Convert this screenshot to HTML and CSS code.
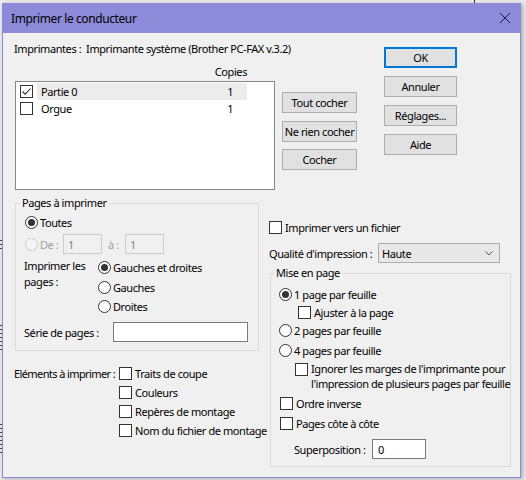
FILE: index.html
```html
<!DOCTYPE html>
<html lang="fr">
<head>
<meta charset="utf-8">
<title>Imprimer le conducteur</title>
<link rel="stylesheet" href="styles.css">
</head>
<body>
<div class="top-mark"></div>
<div class="ticks t1"></div>
<div class="ticks t2"></div>
<div class="ticks t3"></div>
<div class="window">
  <div class="titlebar">
    <span class="title">Imprimer le conducteur</span>
    <svg class="close" width="12" height="12" viewBox="0 0 12 12"><path d="M1 1 L11 11 M11 1 L1 11" stroke="#1c1c40" stroke-width="1" fill="none"/></svg>
  </div>
  <div class="client">
    <div class="top">
      <div class="top-left">
        <div class="printer">Imprimantes :&nbsp; Imprimante système (Brother PC-FAX v.3.2)</div>
        <div class="copies-head">Copies</div>
        <div class="list-row">
          <div class="listbox">
            <div class="item selected">
              <span class="cb checked"><svg width="11" height="11" viewBox="0 0 11 11"><path d="M1.5 5.5 L4.2 8.2 L9.5 2.5" stroke="#333" stroke-width="1.1" fill="none"/></svg></span>
              <span class="cell"><span>Partie 0</span><span>1</span></span>
            </div>
            <div class="item">
              <span class="cb"></span>
              <span class="cell"><span>Orgue</span><span>1</span></span>
            </div>
          </div>
          <div class="mid-buttons">
            <div class="btn b1">Tout cocher</div>
            <div class="btn b2">Ne rien cocher</div>
            <div class="btn b3">Cocher</div>
          </div>
        </div>
      </div>
      <div class="right-buttons">
        <div class="btn rbtn default">OK</div>
        <div class="btn rbtn">Annuler</div>
        <div class="btn rbtn">Réglages...</div>
        <div class="btn rbtn">Aide</div>
      </div>
    </div>
    <div class="bottom">
      <div class="bottom-left">
        <fieldset class="group pages">
          <legend>Pages à imprimer</legend>
          <div class="row r-toutes"><span class="radio on"></span><span>Toutes</span></div>
          <div class="row r-de">
            <span class="radio disabled"></span><span class="lbl-de dis">De :</span>
            <span class="input dis-input w39">1</span>
            <span class="lbl-a dis">à :</span>
            <span class="input dis-input w39">1</span>
          </div>
          <div class="sides">
            <div class="sides-label">Imprimer les<br>pages :</div>
            <div class="sides-opts">
              <div class="opt"><span class="radio on"></span><span>Gauches et droites</span></div>
              <div class="opt"><span class="radio"></span><span>Gauches</span></div>
              <div class="opt"><span class="radio"></span><span>Droites</span></div>
            </div>
          </div>
          <div class="row r-serie"><span class="lbl-serie">Série de pages :</span><span class="input w135"></span></div>
        </fieldset>
        <div class="elements">
          <div class="el-label">Eléments à imprimer :</div>
          <div class="el-opts">
            <div class="el"><span class="cb"></span><span>Traits de coupe</span></div>
            <div class="el"><span class="cb"></span><span>Couleurs</span></div>
            <div class="el"><span class="cb"></span><span>Repères de montage</span></div>
            <div class="el"><span class="cb"></span><span>Nom du fichier de montage</span></div>
          </div>
        </div>
      </div>
      <div class="bottom-right">
        <div class="row r-file"><span class="cb"></span><span>Imprimer vers un fichier</span></div>
        <div class="row r-quality">
          <span class="lbl-quality">Qualité d'impression :</span>
          <span class="select"><span>Haute</span><svg width="8" height="5" viewBox="0 0 8 5"><path d="M0.5 0.5 L4 4 L7.5 0.5" stroke="#555" stroke-width="1" fill="none"/></svg></span>
        </div>
        <fieldset class="group layout">
          <legend>Mise en page</legend>
          <div class="row m1"><span class="radio on"></span><span>1 page par feuille</span></div>
          <div class="row m2"><span class="cb"></span><span>Ajuster à la page</span></div>
          <div class="row m3"><span class="radio"></span><span>2 pages par feuille</span></div>
          <div class="row m4"><span class="radio"></span><span>4 pages par feuille</span></div>
          <div class="row m5"><span class="cb"></span><span class="two">Ignorer les marges de l'imprimante pour<br>l'impression de plusieurs pages par feuille</span></div>
          <div class="row m6"><span class="cb"></span><span>Ordre inverse</span></div>
          <div class="row m7"><span class="cb"></span><span>Pages côte à côte</span></div>
          <div class="row m8"><span class="lbl-super">Superposition :</span><span class="input w54">0</span></div>
        </fieldset>
      </div>
    </div>
  </div>
</div>
</body>
</html>
```
FILE: styles.css
```css
* { box-sizing: border-box; }
html, body { margin: 0; padding: 0; }
body {
  width: 526px;
  height: 480px;
  overflow: hidden;
  background: #e9e9ec;
  font-family: "Noto Sans", "Open Sans", sans-serif;
  font-size: 11px;
  letter-spacing: -0.42px;
  color: #000;
  position: relative;
}
.top-mark {
  position: absolute;
  left: 474px;
  top: 0;
  width: 1px;
  height: 3px;
  background: #333;
}
.ticks {
  position: absolute;
  left: 0;
  width: 2px;
  background: repeating-linear-gradient(to bottom, #444 0, #444 1px, transparent 1px, transparent 4px);
}
.t1 { top: 240px; height: 12px; }
.t2 { top: 325px; height: 26px; }
.t3 { top: 424px; height: 29px; }
.window {
  margin: 3px 0 0 2px;
  width: 519px;
  height: 475px;
  border: 1px solid #8d8ad9;
  border-top: 0;
  background: #f0f0f0;
  box-shadow: 2px 1px 4px rgba(0,0,0,0.25);
  display: flex;
  flex-direction: column;
}
.titlebar {
  height: 30px;
  flex: none;
  margin: 0 -1px;
  background: #8d8ad9;
  display: flex;
  align-items: center;
  justify-content: space-between;
  padding: 0 10px 0 9px;
  font-size: 12px;
  letter-spacing: -0.4px;
}
.close { display: block; }
.client {
  flex: 1;
  padding-left: 11px;
}
.top { display: flex; }
.top-left { width: 370px; padding-top: 8px; }
.printer { height: 16px; line-height: 16px; white-space: nowrap; }
.copies-head { margin-top: 7px; height: 16px; line-height: 16px; width: 233px; text-align: right; }
.list-row { display: flex; margin-top: 1px; }
.listbox {
  margin-left: 1px;
  width: 260px;
  height: 109px;
  border: 1px solid #828790;
  background: #fff;
  padding-top: 1px;
}
.item { height: 17px; display: flex; align-items: center; padding-left: 4px; }
.cell {
  margin-left: 4px;
  width: 210px;
  height: 17px;
  display: flex;
  align-items: center;
  justify-content: space-between;
  padding: 0 14px 0 4px;
}
.selected .cell { background: #ececec; }
.mid-buttons { margin-left: 7px; padding-top: 11px; display: flex; flex-direction: column; }
.btn {
  height: 21px;
  background: #e1e1e1;
  border: 1px solid #adadad;
  display: flex;
  align-items: center;
  justify-content: center;
  white-space: nowrap;
}
.mid-buttons .btn { width: 75px; }
.b2 { margin-top: 8px; }
.b3 { margin-top: 7px; }
.right-buttons { margin-top: 14px; display: flex; flex-direction: column; gap: 8px; }
.rbtn { width: 73px; }
.default { border-color: #0078d7; box-shadow: inset 0 0 0 1px #0078d7; }

.cb {
  width: 13px;
  height: 13px;
  border: 1px solid #333;
  background: #fff;
  flex: none;
  display: flex;
  align-items: center;
  justify-content: center;
}
.cb svg { display: block; }
.radio {
  width: 13px;
  height: 13px;
  border: 1px solid #333;
  border-radius: 50%;
  background: #fff;
  flex: none;
  display: flex;
  align-items: center;
  justify-content: center;
  margin-right: 2px;
}
.radio.on::after {
  content: "";
  width: 7px;
  height: 7px;
  border-radius: 50%;
  background: #333;
}
.radio.disabled { border-color: #cfcfcf; background: #f4f4f4; }
.dis { color: #a0a0a0; }
.input {
  height: 20px;
  border: 1px solid #7a7a7a;
  background: #fff;
  display: flex;
  align-items: center;
  padding-left: 4px;
  flex: none;
}
.dis-input { border-color: #cccccc; background: #f0f0f0; color: #838383; }
.w39 { width: 39px; }
.w135 { width: 135px; }
.w54 { width: 54px; padding-left: 5px; }

.bottom { display: flex; }
.bottom-left { width: 255px; }
.group {
  margin: 0;
  padding: 0 0 0 8px;
  border: 1px solid #dcdcdc;
  min-width: 0;
}
.group legend {
  padding: 0 2px;
  line-height: 14px;
  height: 14px;
}
.row { display: flex; align-items: center; height: 16px; white-space: nowrap; }
.row .cb { margin-right: 3px; }

.pages {
  margin: 6px 0 0 1px;
  width: 244px;
  height: 155px;
}
.pages legend { margin-left: -4px; }
.r-toutes { margin-top: 4px; padding-left: 1px; }
.r-de { margin-top: 4px; height: 20px; padding-left: 1px; }
.lbl-de { width: 23px; }
.lbl-a { margin-left: 6px; width: 17px; }
.sides { display: flex; margin-top: 4px; height: 58.5px; }
.sides-label { width: 74px; line-height: 15.5px; padding-top: 0; }
.sides-opts { display: flex; flex-direction: column; }
.opt { display: flex; align-items: center; height: 19.5px; white-space: nowrap; }
.r-serie { margin-top: 5.5px; height: 20px; }
.lbl-serie { width: 89px; }

.elements { display: flex; margin-top: 12.5px; }
.el-label { width: 105px; height: 19px; line-height: 19px; white-space: nowrap; letter-spacing: -0.6px; }
.el-opts { display: flex; flex-direction: column; }
.el { display: flex; align-items: center; height: 19px; white-space: nowrap; }
.el .cb { margin-right: 3px; }

.bottom-right { width: 250px; }
.r-file { margin-top: 29px; }
.r-quality { margin-top: 8px; height: 20px; }
.lbl-quality { width: 109px; }
.select {
  width: 122px;
  height: 20px;
  border: 1px solid #adadad;
  background: #e8e8e8;
  display: flex;
  align-items: center;
  justify-content: space-between;
  padding: 0 6px 0 3px;
}
.select svg { display: block; }
.layout {
  margin: 3px 0 0 1px;
  width: 241px;
  height: 201px;
}
.layout legend { margin-left: -5px; }
.m1 { margin-top: 6px; }
.m2 { margin-top: 2px; padding-left: 19px; }
.m3 { margin-top: 2px; }
.m4 { margin-top: 4px; }
.m5 { margin-top: 4px; height: 29px; align-items: flex-start; padding-left: 16px; }
.m5 .cb { margin-top: 1px; }
.two { line-height: 14.5px; }
.m6 { margin-top: 4px; padding-left: 1px; }
.m7 { margin-top: 4px; padding-left: 1px; }
.m8 { margin-top: 8px; height: 20px; padding-left: 15px; }
.lbl-super { width: 78px; }
```
